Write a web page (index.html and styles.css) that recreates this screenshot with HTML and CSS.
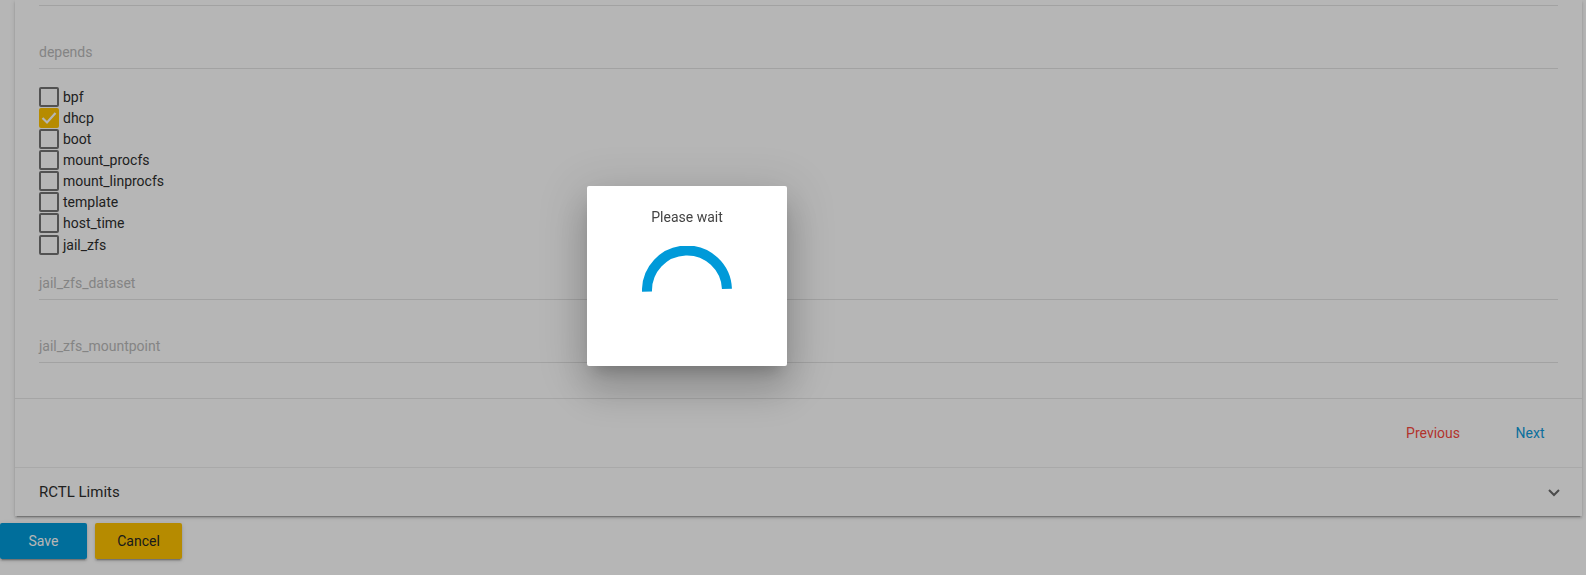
FILE: index.html
```html
<!DOCTYPE html>
<html lang="en">
<head>
<meta charset="utf-8">
<title>Jail wizard</title>
<link rel="stylesheet" href="styles.css">
</head>
<body>
<div class="page">
  <div class="card">
    <div class="panel-body">
      <div class="field-tail"></div>
      <div class="field"><span class="ph">depends</span></div>
      <div class="checks">
        <label class="check"><span class="box"></span><span>bpf</span></label>
        <label class="check"><span class="box on"><svg viewBox="0 0 20 20" width="20" height="20"><polyline points="3.5,10 8,14.5 16.5,5" fill="none" stroke="#ffffff" stroke-width="2.2"/></svg></span><span>dhcp</span></label>
        <label class="check"><span class="box"></span><span>boot</span></label>
        <label class="check"><span class="box"></span><span>mount_procfs</span></label>
        <label class="check"><span class="box"></span><span>mount_linprocfs</span></label>
        <label class="check"><span class="box"></span><span>template</span></label>
        <label class="check"><span class="box"></span><span>host_time</span></label>
        <label class="check"><span class="box"></span><span>jail_zfs</span></label>
      </div>
      <div class="field compact"><span class="ph">jail_zfs_dataset</span></div>
      <div class="field"><span class="ph">jail_zfs_mountpoint</span></div>
    </div>
    <div class="action-row">
      <button class="flat warn">Previous</button>
      <button class="flat primary">Next</button>
    </div>
    <div class="panel-header">
      <span class="title">RCTL Limits</span>
      <svg class="chev" viewBox="0 0 12 8" width="12" height="8"><polyline points="1,1 6,6 11,1" fill="none" stroke="#6a6a6a" stroke-width="2"/></svg>
    </div>
  </div>
  <div class="form-buttons">
    <button class="raised save">Save</button>
    <button class="raised cancel">Cancel</button>
  </div>
</div>
<div class="backdrop"></div>
<div class="dialog">
  <div class="dialog-title">Please wait</div>
  <svg class="spinner" viewBox="0 0 90 90" width="90" height="90"><path d="M5 45.7 A40 40 0 0 1 84.95 42.9" fill="none" stroke="#009ad9" stroke-width="10"/></svg>
</div>
</body>
</html>
```

FILE: styles.css
```css
html, body {
  margin: 0;
  padding: 0;
  background: #ffffff;
  font-family: Roboto, "Liberation Sans", Arial, sans-serif;
  height: 100%;
  overflow: hidden;
}

.page {
  display: flex;
  flex-direction: column;
  align-items: flex-start;
}

.card {
  align-self: stretch;
  margin: 0 4px 0 15px;
  background: #ffffff;
  box-shadow: 0 3px 1px -2px rgba(0,0,0,.2), 0 2px 2px 0 rgba(0,0,0,.14), 0 1px 5px 0 rgba(0,0,0,.12);
}

.panel-body {
  padding: 0 24px 35px 24px;
  display: flex;
  flex-direction: column;
}

.field-tail {
  height: 5px;
  border-bottom: 1px solid #e4e4e4;
}

.field {
  height: 62px;
  box-sizing: content-box;
  display: flex;
  align-items: flex-end;
  border-bottom: 1px solid #e4e4e4;
}

.field.compact {
  height: 44px;
}

.ph {
  display: block;
  font-size: 14px;
  line-height: 16px;
  padding-bottom: 8px;
  color: #bababa;
}

.checks {
  margin-top: 17px;
  display: flex;
  flex-direction: column;
}

.check {
  display: flex;
  align-items: center;
  height: 21.15px;
  gap: 4px;
  font-size: 14px;
  color: #2e2e2e;
}

.box {
  width: 20px;
  height: 20px;
  box-sizing: border-box;
  border: 2px solid #747474;
  border-radius: 2px;
  display: flex;
}

.box.on {
  border: none;
  background: #ffc300;
}

.action-row {
  border-top: 1px solid #e8e8e8;
  padding: 16px 20px 16px 24px;
  display: flex;
  justify-content: flex-end;
  gap: 22px;
}

button {
  font-family: Roboto, "Liberation Sans", Arial, sans-serif;
  font-size: 14px;
  border: none;
  cursor: pointer;
}

.flat {
  height: 36px;
  min-width: 64px;
  padding: 0 16px;
  background: transparent;
}

.flat.warn { color: #fa4a3e; }
.flat.primary { color: #0f9cdc; }

.panel-header {
  border-top: 1px solid #ededed;
  height: 48px;
  padding: 0 22px 0 24px;
  display: flex;
  align-items: center;
  justify-content: space-between;
}

.panel-header .title {
  font-size: 15px;
  color: #2e2e2e;
}

.chev {
  margin-top: 2px;
}

.form-buttons {
  margin-top: 7px;
  display: flex;
  gap: 8px;
}

.raised {
  min-width: 87px;
  height: 36px;
  padding: 0 16px;
  border-radius: 2px;
  box-shadow: 0 3px 1px -2px rgba(0,0,0,.2), 0 2px 2px 0 rgba(0,0,0,.14), 0 1px 5px 0 rgba(0,0,0,.12);
}

.raised.save {
  background: #009ad9;
  color: #ffffff;
}

.raised.cancel {
  background: #ffc300;
  color: #262626;
}

.backdrop {
  position: fixed;
  inset: 0;
  background: rgba(0,0,0,.288);
}

.dialog {
  position: absolute;
  left: 587px;
  top: 186px;
  width: 200px;
  height: 180px;
  box-sizing: border-box;
  background: #ffffff;
  border-radius: 2px;
  padding-top: 21px;
  display: flex;
  flex-direction: column;
  align-items: center;
  box-shadow: 0 11px 15px -7px rgba(0,0,0,.2), 0 24px 38px 3px rgba(0,0,0,.14), 0 9px 46px 8px rgba(0,0,0,.12);
}

.dialog-title {
  font-size: 14px;
  line-height: 20px;
  color: #444444;
}

.spinner {
  margin-top: 19px;
}
```
